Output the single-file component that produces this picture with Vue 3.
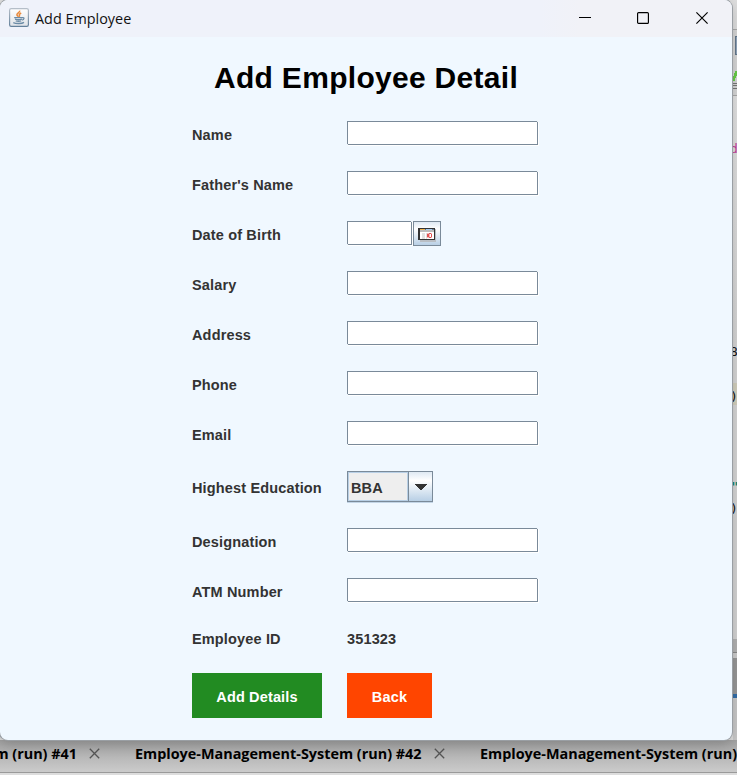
<script setup>
const textRows = [
  { label: 'Name', kind: 'text' },
  { label: "Father's Name", kind: 'text' },
  { label: 'Date of Birth', kind: 'date' },
  { label: 'Salary', kind: 'text' },
  { label: 'Address', kind: 'text' },
  { label: 'Phone', kind: 'text' },
  { label: 'Email', kind: 'text' },
  { label: 'Highest Education', kind: 'combo' },
  { label: 'Designation', kind: 'text' },
  { label: 'ATM Number', kind: 'text' },
]
</script>

<template>
  <div class="desktop">
    <div class="ide">
      <div class="editor">
        <div class="seg head"></div>
        <div class="seg toolbar">
          <svg width="4" height="66" viewBox="0 0 4 66" shape-rendering="crispEdges">
            <path d="M2 6h2v19H2z" fill="#64788c" />
            <path d="M3 7h1v17H3z" fill="#91a5bb" />
            <path d="M0 51v-5h1v-3h1v-2h2v5H3v2H2v3z" fill="#68cc48" />
            <path d="M0 53h4v1H0zM0 55h4v1H0zM0 58h4v1H0z" fill="#787878" />
          </svg>
        </div>
        <div class="seg code1"><span class="pink">d</span></div>
        <div class="seg code2"><span>8</span></div>
        <div class="seg current"><span>)</span></div>
        <div class="seg code3"><span class="teal">"</span></div>
        <div class="seg code4"><span>)</span></div>
        <div class="seg scroll"></div>
        <div class="seg gap"></div>
        <div class="seg tab"></div>
        <div class="seg line"></div>
        <div class="seg rest"></div>
      </div>
      <div class="tabs">
        <span class="t1">m (run) #41</span>
        <svg class="x" width="11" height="11" viewBox="0 0 11 11"><path d="M.8.8l9.4 9.4M10.2.8L.8 10.2" /></svg>
        <span class="t2">Employe-Management-System (run) #42</span>
        <svg class="x" width="11" height="11" viewBox="0 0 11 11"><path d="M.8.8l9.4 9.4M10.2.8L.8 10.2" /></svg>
        <span class="t3">Employe-Management-System (run)</span>
      </div>
    </div>

    <div class="window">
      <header class="titlebar">
        <svg class="java" width="20" height="19" viewBox="0 0 20 19">
          <defs>
            <linearGradient id="jb" x1="0" y1="0" x2="0" y2="1">
              <stop offset="0" stop-color="#fff" /><stop offset="1" stop-color="#dfe3e8" />
            </linearGradient>
            <linearGradient id="jf" x1="0" y1="0" x2="0" y2="1">
              <stop offset="0" stop-color="#b5bec8" /><stop offset="1" stop-color="#64819b" />
            </linearGradient>
          </defs>
          <rect x=".6" y=".6" width="18.8" height="17.8" rx="1.6" fill="url(#jb)" stroke="url(#jf)" stroke-width="1.2" />
          <path d="M10.6 2.6c.8 1.700-2.700 2.600-2.700 4.100 0 .9 1 1.400 1.400 2.100M12.200 5c-1.500.7-2.200 1.300-1.800 2.200.3.600.3 1-.3 1.600" fill="none" stroke="#e98a3c" stroke-width="1.500" />
          <path d="M5.200 9.700h8.300M6 11.200c2 .6 5 .6 6.800 0M6.700 13c1.700.5 4 .5 5.500 0M4.300 14.600c2.800 1.300 8.600 1.200 10.700-.2M13.300 9.700c2.400-.6 2.200 1.900-.5 2.500" fill="none" stroke="#6b8ba6" stroke-width="1.300" />
        </svg>
        <span class="caption">Add Employee</span>
        <div class="controls">
          <svg width="12" height="12" viewBox="0 0 12 12"><path d="M0 5.500h12" /></svg>
          <svg width="12" height="12" viewBox="0 0 12 12"><rect x=".6" y=".6" width="10.800" height="10.800" rx="1" /></svg>
          <svg width="12" height="12" viewBox="0 0 12 12"><path d="M.4.4l11.200 11.200M11.600.4L.4 11.600" /></svg>
        </div>
      </header>

      <main class="content">
        <h1>Add Employee Detail</h1>
        <div class="form">
          <template v-for="row in textRows" :key="row.label">
            <label>{{ row.label }}</label>
            <div v-if="row.kind === 'text'" class="field"></div>
            <div v-else-if="row.kind === 'date'" class="date">
              <div class="field short"></div>
              <div class="calendar">
                <svg width="18" height="14" viewBox="0 0 18 14" shape-rendering="crispEdges">
                  <path d="M2 1h16v13H2z" fill="#b9bec4" />
                  <path d="M0 0h17v12H0z" fill="#333" />
                  <path d="M2 1h14v10H2z" fill="#fff" />
                  <path d="M2 1h14v3H2z" fill="#bdbdbd" />
                  <path d="M2 1h5v1H2z" fill="#f0b450" />
                  <path d="M7 1h1v1H7z" fill="#477cac" />
                  <path d="M8 1h6v1H8z" fill="#a9cdf0" />
                  <path d="M14 1h2v1h-2z" fill="#6e7f90" />
                  <path d="M4 5h3v6H4z" fill="#e2e2e2" />
                  <path d="M8 5h1v6H8z" fill="#e2e2e2" />
                  <path d="M9 5h5v5H9z" fill="#f2b7b7" />
                  <path d="M9 6h2v3H9zM13 6h1v3h-1zM11 5h2v1h-2zM11 9h2v1h-2z" fill="#e35252" />
                  <path d="M12 6h1v3h-1z" fill="#fff" />
                </svg>
              </div>
            </div>
            <div v-else class="combo">
              <div class="value">BBA</div>
              <div class="arrow">
                <svg width="12" height="6" viewBox="0 0 12 6" shape-rendering="crispEdges"><path d="M0 0h12v1H0zM1 1h10v1H1zM2 2h8v1H2zM3 3h6v1H3zM4 4h4v1H4zM5 5h2v1H5z" fill="#333" /></svg>
              </div>
            </div>
          </template>
          <label>Employee ID</label>
          <span class="id">351323</span>
          <button class="add">Add Details</button>
          <button class="back">Back</button>
        </div>
      </main>
    </div>
  </div>
</template>

<style>
body {
  margin: 0;
  overflow: hidden;
}
</style>

<style scoped>
.desktop {
  position: relative;
  width: 737px;
  height: 775px;
  overflow: hidden;
  background: #ddd;
}
.ide {
  height: 775px;
  display: flex;
  flex-direction: column;
}
.editor {
  height: 740px;
  padding-left: 733px;
  display: flex;
  flex-direction: column;
  font: 13px "DejaVu Sans Mono", monospace;
  color: #111;
}
.seg {
  box-sizing: border-box;
  flex: none;
  width: 4px;
  overflow: hidden;
  background: #dcdcdc;
}
.seg span {
  display: block;
  line-height: 16px;
  margin-left: -3px;
}
.seg svg { display: block; }
.head { height: 30px; border-bottom: 1px solid #aaa; background: #dedede; }
.toolbar { height: 66px; border-bottom: 1px solid #aaa; background: #d6d6d6; }
.code1 { height: 247px; padding-top: 45px; background: linear-gradient(#e2e2e2, #d4d4d4); }
.code2 { height: 40px; padding-top: 1px; background: #d5d5d5; }
.current { height: 22px; padding-top: 6px; background: #d2cfbd; }
.code3 { height: 95px; padding-top: 74px; background: #d5d5d5; }
.code4 { height: 139px; padding-top: 1px; background: #d3d3d3; }
.scroll { height: 14px; background: #b2b2b2; border-bottom: 1px solid #888; }
.gap { height: 5px; background: #ccc; }
.tab { height: 36px; background: #979797; }
.line { height: 4px; background: #326da8; }
.rest { flex: 1; background: #c8c8c8; }
.code1 .pink { color: #c13f9b; }
.code3 .teal { margin-left: -2px; font-weight: bold; color: #13866e; }
.tabs {
  box-sizing: border-box;
  height: 33px;
  flex: none;
  display: flex;
  align-items: center;
  padding-bottom: 5px;
  border-bottom: 1px solid #9a9a9a;
  background: linear-gradient(#a2a2a2, #cbcbcb);
  font: bold 14.400px "Open Sans", "Noto Sans", sans-serif;
  color: #000;
  white-space: nowrap;
}
.tabs span { flex: none; box-sizing: border-box; }
.t1 { width: 100px; margin-left: -11px; padding-right: 12px; text-align: right; }
.t2 { width: 334px; padding-left: 35px; }
.t3 { padding-left: 35px; }
.x { flex: none; fill: none; stroke: #555; stroke-width: 1.300; }

.window {
  position: absolute;
  left: 0;
  top: 0;
  width: 732px;
  height: 740px;
  background: #f0f8ff;
  border-radius: 8px;
  overflow: hidden;
  box-shadow: 0 0 0 1px #9a9fa4, 0 4px 14px rgba(0, 0, 0, 0.2);
}
.titlebar {
  height: 37px;
  display: flex;
  align-items: center;
  padding-left: 9px;
  box-sizing: border-box;
  background: linear-gradient(90deg, #eff2fa 0 540px, #f1f2f7 580px);
}
.java { margin-top: -2px; }
.caption {
  margin-left: 6px;
  font: 14.400px/20px "Open Sans", "Noto Sans", sans-serif;
  color: #111;
}
.controls {
  margin-left: auto;
  margin-right: 24px;
  margin-top: -2px;
  display: flex;
  gap: 46px;
}
.controls svg { display: block; fill: none; stroke: #000; stroke-width: 1.150; }
.controls svg:last-child { margin-left: 1px; }

.content {
  font-family: "Liberation Sans", Arial, sans-serif;
}
h1 {
  margin: 0;
  padding: 23px 0 0 214px;
  height: 61px;
  font-size: 30px;
  line-height: 36px;
  letter-spacing: 0.300px;
  color: #000;
}
.form {
  display: grid;
  grid-template-columns: 130px 193px;
  grid-template-rows: repeat(7, 25px) 32px 25px 25px 20px 45px;
  gap: 25px;
  padding-left: 192px;
  font-weight: bold;
  font-size: 14.500px;
  letter-spacing: 0.150px;
  color: #333;
}
label,
.id {
  align-self: center;
  padding-top: 2px;
  line-height: 20px;
  white-space: nowrap;
}
.field {
  position: relative;
  box-sizing: border-box;
  width: 191px;
  height: 24px;
  background: #fff;
  border: 1px solid #7a8a99;
  box-shadow: 1px 1px 0 #fff;
}
.field::before,
.field::after {
  content: "";
  position: absolute;
  width: 1px;
  height: 1px;
  background: #e8eef3;
}
.field::before { left: -1px; bottom: -1px; }
.field::after { right: -1px; top: -1px; }
.date { display: flex; gap: 1px; }
.short { width: 65px; }
.calendar {
  box-sizing: border-box;
  width: 28px;
  height: 25px;
  padding: 6px 0 0 4px;
  border: 1px solid #7a8a99;
  background: linear-gradient(#dfe9f3, #fff 30%, #b8cfe5);
}
.calendar svg { display: block; }
.combo {
  box-sizing: border-box;
  width: 86px;
  height: 31px;
  display: flex;
  border: 1px solid #7a8a99;
  box-shadow: 0 1px 0 #c3d5e6;
}
.value {
  box-sizing: border-box;
  width: 60px;
  padding-left: 2px;
  border: 1px solid #b8cfe5;
  background: #eee;
  line-height: 30px;
}
.arrow {
  flex: 1;
  display: flex;
  align-items: center;
  justify-content: center;
  border-left: 1px solid #7a8a99;
  background: linear-gradient(#dfe9f3, #fff 30%, #b8cfe5);
}
button {
  border: 0;
  border-radius: 0;
  padding: 2px 0 0;
  height: 45px;
  font: inherit;
  letter-spacing: inherit;
  color: #fff;
}
.add { background: #228b22; }
.back { width: 85px; background: #ff4500; }
</style>
